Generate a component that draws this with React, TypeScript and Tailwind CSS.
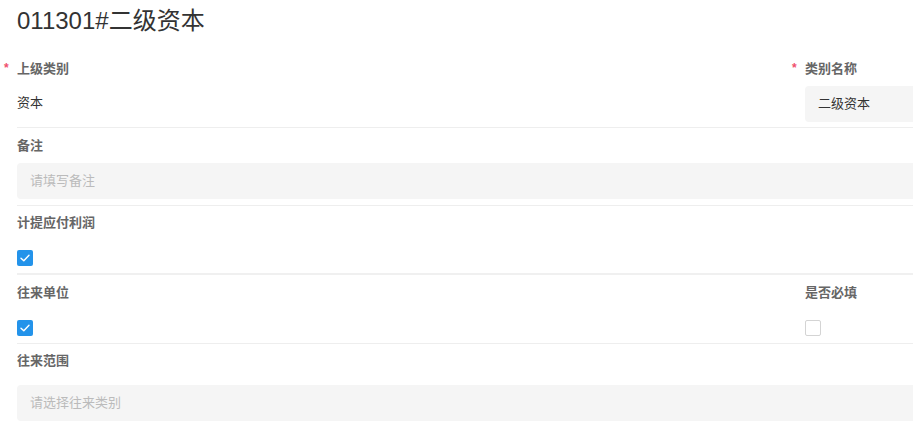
import type { ReactNode } from "react";

function Label({ children, required }: { children: ReactNode; required?: boolean }) {
	return (
		<div className="relative h-5 text-[13px] leading-5 font-semibold text-[#666]">
			{required && (
				<span className="absolute -left-[13px] top-[-1px] text-[12px] text-[#f0506e]">*</span>
			)}
			{children}
		</div>
	);
}

function Input({ value, placeholder }: { value?: string; placeholder?: string }) {
	return (
		<div className="flex h-9 items-center rounded bg-[#f5f5f5] px-[13px] text-[13px]">
			{value ? (
				<span className="text-[#333]">{value}</span>
			) : (
				<span className="text-[#bbb]">{placeholder}</span>
			)}
		</div>
	);
}

function Checkbox({ checked }: { checked?: boolean }) {
	if (!checked) {
		return <div className="size-4 rounded-[2px] border border-[#d4d4d4] bg-white" />;
	}
	return (
		<div className="flex size-4 items-center justify-center rounded-[2px] bg-[#2393ea]">
			<svg aria-hidden="true" width="12" height="12" viewBox="0 0 12 12" fill="none">
				<path d="M2 6.2L4.8 8.8L10 3.2" stroke="white" strokeWidth="1.4" strokeLinecap="round" strokeLinejoin="round" />
			</svg>
		</div>
	);
}

export default function App() {
	return (
		<div className="h-[445px] w-[913px] overflow-hidden bg-white font-['Liberation_Sans','Noto_Sans_CJK_SC',sans-serif]">
			<div className="w-[1100px] pl-[17px]">
				<h1 className="h-[42px] text-[24px] leading-[42px] text-[#333]">011301#二级资本</h1>

				<div className="grid h-[86px] grid-cols-[788px_1fr] border-b border-[#eee] pt-[17px]">
					<div>
						<Label required>上级类别</Label>
						<div className="mt-[14px] h-5 text-[13px] leading-5 text-[#333]">资本</div>
					</div>
					<div>
						<Label required>类别名称</Label>
						<div className="mt-[7px] w-[200px]">
							<Input value="二级资本" />
						</div>
					</div>
				</div>

				<div className="border-b border-[#eee] pt-2 pb-[6px]">
					<Label>备注</Label>
					<div className="mt-[7px]">
						<Input placeholder="请填写备注" />
					</div>
				</div>

				<div className="border-b-2 border-[#f0f0f0] pt-[7px] pb-[7px]">
					<Label>计提应付利润</Label>
					<div className="mt-[17px]">
						<Checkbox checked />
					</div>
				</div>

				<div className="grid grid-cols-[788px_1fr] border-b border-[#eee] pt-2 pb-[7px]">
					<div>
						<Label>往来单位</Label>
						<div className="mt-[17px]">
							<Checkbox checked />
						</div>
					</div>
					<div>
						<Label>是否必填</Label>
						<div className="mt-[17px]">
							<Checkbox />
						</div>
					</div>
				</div>

				<div className="pt-[7px]">
					<Label>往来范围</Label>
					<div className="mt-[14px]">
						<Input placeholder="请选择往来类别" />
					</div>
				</div>
			</div>
		</div>
	);
}
